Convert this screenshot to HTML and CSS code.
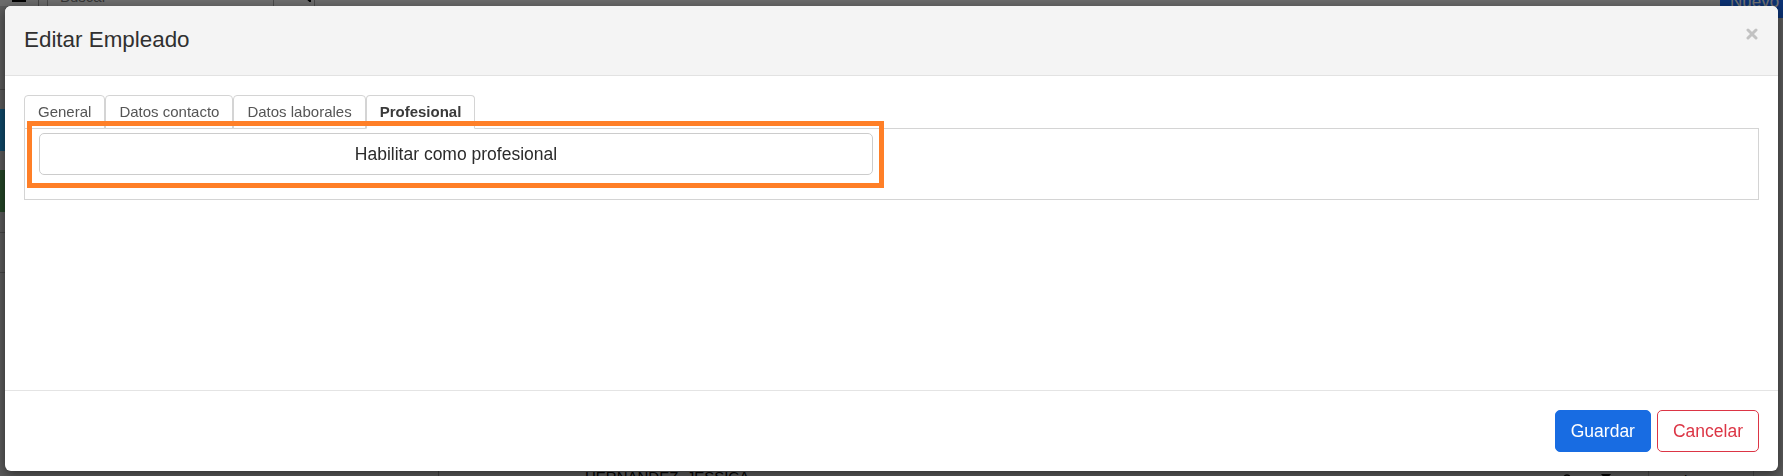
FILE: index.html
```html
<!DOCTYPE html>
<html lang="es">
<head>
<meta charset="utf-8">
<title>Editar Empleado</title>
<link rel="stylesheet" href="styles.css">
</head>
<body>
<div class="app">
  <header class="topbar">
    <div class="burger">
      <svg width="14" height="12" viewBox="0 0 14 12"><rect x="0" y="0" width="14" height="2" fill="#000"/><rect x="0" y="5" width="14" height="2" fill="#000"/><rect x="0" y="10" width="14" height="2" fill="#000"/></svg>
    </div>
    <div class="search">
      <input class="search-input" type="text" placeholder="Buscar">
      <button class="search-btn" type="button">
        <svg width="14" height="14" viewBox="0 0 14 14"><circle cx="6" cy="6" r="4.5" fill="none" stroke="#000" stroke-width="2"/><line x1="9.5" y1="9.5" x2="13" y2="13" stroke="#000" stroke-width="2.4" stroke-linecap="round"/></svg>
      </button>
    </div>
    <button class="btn-new" type="button">Nuevo</button>
  </header>
  <div class="layout">
    <nav class="sidebar">
      <div class="side-head"></div>
      <div class="side-gap"></div>
      <div class="side-item blue"></div>
      <div class="side-gap"></div>
      <div class="side-item green"></div>
      <div class="side-item small"></div>
      <div class="side-item mid"></div>
    </nav>
    <main class="list">
      <div class="row">
        <span class="cell-name">HERNÁNDEZ, JESSICA</span>
        <span class="cell-dni">DNI 20000224</span>
        <span class="cell-icon"><svg width="10" height="12" viewBox="0 0 10 12"><circle cx="5" cy="4" r="3" fill="none" stroke="#000" stroke-width="1.4"/></svg></span>
        <span class="cell-icon"><svg width="12" height="12" viewBox="0 0 12 12"><path d="M1 0h10l-5 6z" fill="#000"/></svg></span>
        <span class="cell-action">Acciones</span>
      </div>
    </main>
  </div>
</div>

<div class="backdrop"></div>

<div class="modal" role="dialog">
  <div class="modal-header">
    <h5 class="modal-title">Editar Empleado</h5>
    <button class="close" type="button" aria-label="Cerrar">
      <svg width="12" height="12" viewBox="0 0 12 12"><path d="M2 2L10 10M10 2L2 10" stroke="#c2c2c2" stroke-width="3" stroke-linecap="round"/></svg>
    </button>
  </div>
  <div class="modal-body">
    <ul class="tabs">
      <li class="tab">General</li>
      <li class="tab">Datos contacto</li>
      <li class="tab">Datos laborales</li>
      <li class="tab active">Profesional</li>
    </ul>
    <div class="tab-content">
      <div class="field">
        <button class="btn-block" type="button">Habilitar como profesional</button>
        <div class="highlight"></div>
      </div>
    </div>
  </div>
  <div class="modal-footer">
    <button class="btn btn-primary" type="button">Guardar</button>
    <button class="btn btn-outline-danger" type="button">Cancelar</button>
  </div>
</div>
</body>
</html>
```
FILE: styles.css
```css
* { box-sizing: border-box; }
html, body { margin: 0; height: 100%; }
body {
  font-family: "Liberation Sans", Arial, sans-serif;
  background: #c8c8c8;
  overflow: hidden;
}
button { font-family: inherit; }

/* underlying page */
.app { margin-top: -28px; }
.topbar {
  height: 34px;
  display: flex;
  align-items: flex-start;
  background: #ececec;
}
.burger {
  width: 39px;
  height: 34px;
  padding: 18px 0 0 12px;
  border-right: 1px solid #9a9a9a;
}
.burger svg { display: block; }
.search { display: flex; margin-left: 8px; margin-top: 9px; }
.search-input {
  width: 227px;
  height: 30px;
  border: 1px solid #a8a8a8;
  padding: 0 12px;
  font: 15px/20px "Liberation Sans", Arial, sans-serif;
  background: #f4f4f4;
}
.search-input::placeholder { color: #777; }
.search-btn {
  width: 41px;
  height: 30px;
  border: 1px solid #a8a8a8;
  border-left: 0;
  background: #f4f4f4;
  padding: 0 0 0 20px;
}
.btn-new {
  margin-left: auto;
  width: 63px;
  height: 46px;
  border: 0;
  background: #1a6fff;
  color: #fff;
  font-size: 17px;
  padding: 14px 0 0 10px;
  text-align: left;
}
.layout { display: grid; grid-template-columns: 439px 1fr; }
.sidebar { border-right: 1px solid #8c8c8c; height: 470px; }
.side-head { height: 84px; border-bottom: 1px solid #999; }
.side-gap { height: 19px; }
.side-item { height: 42px; }
.side-item.blue { background: #21a0e8; }
.side-item.green { background: #4f9a55; }
.side-item.small { height: 21px; border-bottom: 1px solid #999; }
.side-item.mid { height: 40px; border-bottom: 1px solid #999; }
.list { padding-top: 461px; }
.row { display: flex; align-items: flex-start; font-size: 15px; line-height: 20px; color: #000; }
.cell-name { margin-left: 146px; width: 262px; }
.cell-dni { margin-top: 4px; width: 715px; }
.cell-icon { width: 38px; padding-top: 4px; }
.cell-action { margin-left: 10px; padding-left: 10px; border-left: 1px solid #999; border-right: 1px solid #999; width: 106px; padding-top: 4px; }

/* modal */
.backdrop {
  position: fixed;
  inset: 0;
  background: rgba(0, 0, 0, 0.55);
}
.modal {
  position: fixed;
  top: 6px;
  left: 5px;
  right: 5px;
  background: #fff;
  border-radius: 6px;
  box-shadow: 0 3px 12px rgba(0, 0, 0, 0.5);
  overflow: hidden;
}
.modal-header {
  display: flex;
  justify-content: space-between;
  align-items: flex-start;
  padding: 17px 20px 19px 19px;
  background: #f4f4f4;
  border-bottom: 1px solid #e2e2e2;
}
.modal-title {
  margin: 0;
  font-size: 22.4px;
  line-height: 33px;
  font-weight: 400;
  color: #303030;
}
.close {
  margin-top: 5px;
  width: 12px;
  height: 12px;
  padding: 0;
  border: 0;
  background: none;
  display: flex;
}
.modal-body {
  height: 314px;
  padding: 19px 19px 0;
}
.tabs {
  display: flex;
  list-style: none;
  margin: 0;
  padding: 0;
  border-bottom: 1px solid #d4d4d4;
}
.tab {
  margin-bottom: -1px;
  padding: 6px 13px;
  font-size: 15px;
  line-height: 20px;
  color: #555;
  background: #fff;
  border: 1px solid #d4d4d4;
  border-radius: 4px 4px 0 0;
}
.tab.active {
  font-weight: 700;
  color: #3a3a3a;
  border-bottom-color: #fff;
}
.tab-content {
  border: 1px solid #d4d4d4;
  border-top: 0;
  padding: 4px 13px 24px 14px;
}
.field {
  position: relative;
  width: 834px;
}
.btn-block {
  display: block;
  width: 100%;
  height: 42px;
  padding: 0;
  font-size: 17.5px;
  line-height: 26px;
  color: #2b2b2b;
  background: #fff;
  border: 1px solid #cccccc;
  border-radius: 5px;
}
.highlight {
  position: absolute;
  top: -12px;
  left: -12px;
  right: -11px;
  bottom: -13px;
  border: 5px solid #ff7f27;
  pointer-events: none;
}
.modal-footer {
  display: flex;
  justify-content: flex-end;
  gap: 6px;
  padding: 19px;
  border-top: 1px solid #e4e4e4;
}
.btn {
  height: 42px;
  padding: 0 15px;
  font-size: 17.5px;
  line-height: 26px;
  border: 1px solid;
  border-radius: 5px;
}
.btn-primary {
  background: #186ce2;
  border-color: #186ce2;
  color: #fff;
}
.btn-outline-danger {
  background: #fff;
  border-color: #dc3545;
  color: #dc3545;
}
```
